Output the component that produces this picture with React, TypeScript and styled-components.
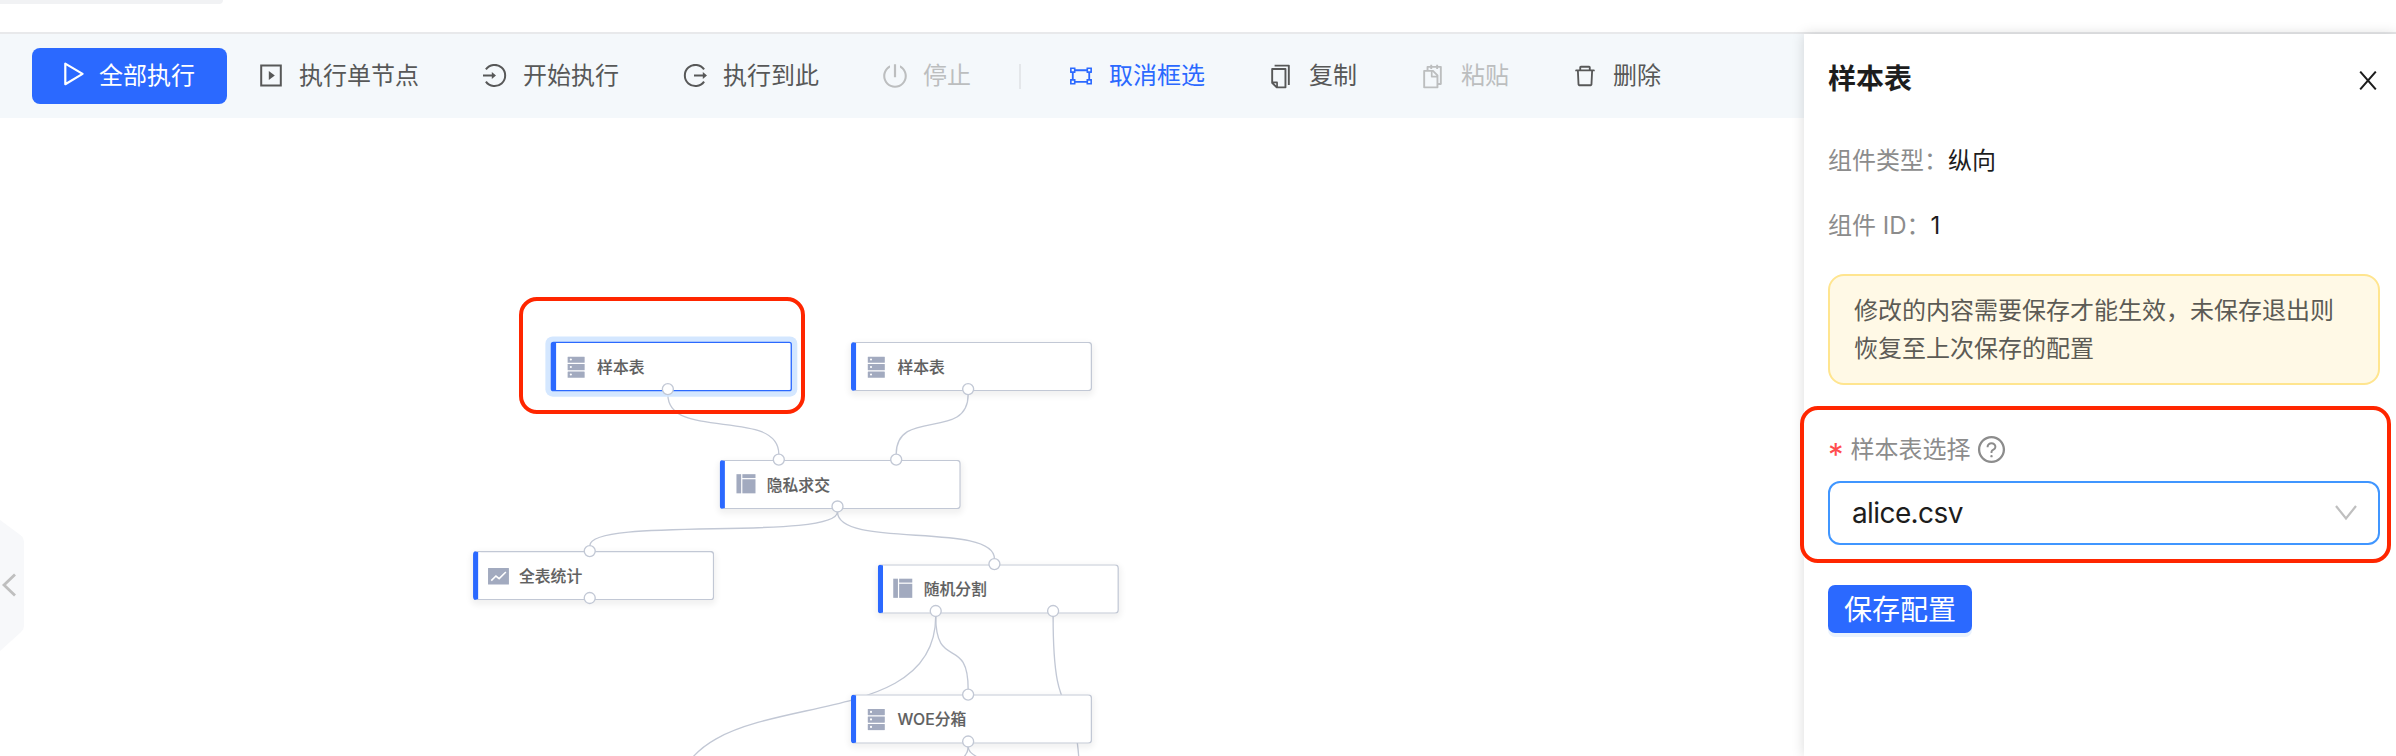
import React from 'react';
import styled, { createGlobalStyle } from 'styled-components';
import {
  AiOutlineCopy,
  AiOutlineDelete,
  AiOutlineGateway,
  AiOutlinePoweroff,
  AiOutlineQuestionCircle,
  AiOutlineSnippets,
} from 'react-icons/ai';

const GlobalStyle = createGlobalStyle`
  * { box-sizing: border-box; }
  body {
    margin: 0;
    background: #fff;
    font-family: Inter, "Noto Sans CJK SC", sans-serif;
    overflow: hidden;
  }
  button { font-family: inherit; border: 0; background: none; padding: 0; }
`;

const Page = styled.div`
  height: 756px;
  width: 100%;
  display: flex;
  flex-direction: column;
  overflow: hidden;
`;

const TopStrip = styled.header`
  flex: none;
  height: 34px;
  border-bottom: 2px solid #e8e9eb;
`;

const TabStub = styled.div`
  width: 223px;
  height: 4px;
  background: #f1f2f4;
  border-radius: 0 0 8px 0;
`;

const Main = styled.div`
  flex: 1;
  min-height: 0;
  display: flex;
`;

const Workspace = styled.main`
  flex: 1;
  min-width: 0;
  display: flex;
  flex-direction: column;
`;

const Toolbar = styled.div`
  flex: none;
  height: 84px;
  padding-left: 32px;
  display: flex;
  align-items: center;
  background: #f4f8fb;
`;

const RunAll = styled.button`
  width: 195px;
  height: 56px;
  margin-right: 32px;
  padding: 0 0 0 29px;
  display: flex;
  align-items: center;
  gap: 14px;
  border-radius: 8px;
  background: #2b69ff;
  color: #fff;
  font-size: 24px;
  line-height: 36px;

  svg { margin-top: -4px; }
`;

const toneColor = { normal: '#575858', disabled: '#bcbebf', active: '#2b69ff' };
type Tone = keyof typeof toneColor;

const Tool = styled.button<{ $tone: Tone }>`
  display: flex;
  align-items: center;
  gap: 16px;
  margin-right: 64px;
  font-size: 24px;
  line-height: 36px;
  white-space: nowrap;
  color: ${(p) => toneColor[p.$tone]};

  svg { flex: none; }
`;

const ToolGlyph = styled.span`
  display: flex;
  justify-content: center;
  width: 24px;
  margin: 0 0.5px 0 -0.5px;
`;

const Divider = styled.span`
  width: 2px;
  height: 25px;
  margin: 0 48px 0 -16px;
  background: #e4e7ea;
`;

const Canvas = styled.section`
  position: relative;
  flex: 1;
  min-height: 0;
  overflow: hidden;
`;

const ZoomLayer = styled.div`
  position: absolute;
  inset: 0;
  transform: scale(1.34);
  transform-origin: 0 0;
`;

const EdgeLayer = styled.svg`
  position: absolute;
  left: 0;
  top: 0;
  width: 1346px;
  height: 476px;
  overflow: visible;
`;

const NodeCard = styled.div<{ $x: number; $y: number; $selected?: boolean }>`
  position: absolute;
  left: ${(p) => p.$x}px;
  top: ${(p) => p.$y}px;
  width: 180px;
  height: 36.5px;
  padding-left: 7.5px;
  display: flex;
  align-items: center;
  gap: 7px;
  background: #fff;
  border: 1px solid ${(p) => (p.$selected ? '#2b69ff' : '#c2c8d5')};
  border-left: 4px solid #2b69ff;
  border-radius: ${(p) => (p.$selected ? 2 : 3)}px;
  box-shadow: ${(p) => (p.$selected ? '0 0 0 4px #d4e7ff' : '0 2px 5px 1px rgba(0, 0, 0, 0.06)')};
`;

const NodeLabel = styled.span`
  position: relative;
  left: 0.3px;
  top: 0.4px;
  font-size: 11.8px;
  line-height: 18px;
  font-weight: 500;
  color: #606060;
  -webkit-text-stroke: 0.1px #606060;
`;

const CollapseHandle = styled.div`
  position: absolute;
  left: 0;
  top: 402px;
  width: 24px;
  height: 132px;
`;

const Highlight = styled.div<{ $x: number; $y: number; $w: number; $h: number }>`
  position: absolute;
  left: ${(p) => p.$x}px;
  top: ${(p) => p.$y}px;
  width: ${(p) => p.$w}px;
  height: ${(p) => p.$h}px;
  border: 4px solid #ff2600;
  border-radius: 18px;
  pointer-events: none;
`;

const Panel = styled.aside`
  position: relative;
  flex: none;
  width: 592px;
  padding: 25px 16px 0 24px;
  background: #fff;
  box-shadow: 0 0 12px rgba(0, 0, 0, 0.15);
`;

const PanelHeader = styled.div`
  display: flex;
  align-items: center;
  justify-content: space-between;
  height: 40px;
  margin-bottom: 44px;
`;

const PanelTitle = styled.h2`
  margin: 0;
  font-size: 28px;
  line-height: 40px;
  font-weight: 700;
  color: #1d1d1d;
`;

const CloseIcon = styled.svg`
  margin: 3px 3px 0 0;
`;

const Field = styled.div`
  height: 36px;
  margin-bottom: 29px;
  font-size: 24px;
  line-height: 36px;
  color: #8c8c8c;

  b { font-weight: 400; color: #1d1d1d; }
`;

const Notice = styled.div`
  height: 111px;
  margin-top: 30px;
  padding: 16px 24px;
  border: 2px solid #ffe58f;
  border-radius: 16px;
  background: #fff9e6;
  font-size: 24px;
  line-height: 38px;
  color: #5c5b55;
`;

const FormLabel = styled.label`
  display: flex;
  align-items: center;
  height: 36px;
  margin: 47px 0 13px;
  font-size: 24px;
  line-height: 36px;
  color: #8c8c8c;

  svg { margin-left: 5px; margin-top: -2px; }
`;

const Required = styled.span`
  width: 22.5px;
  height: 36px;
  line-height: 46px;
  font-family: Inter, sans-serif;
  font-size: 31px;
  color: #ff4d4f;
`;

const Select = styled.div`
  display: flex;
  align-items: center;
  justify-content: space-between;
  height: 64px;
  padding: 0 21px 0 22px;
  border: 2px solid #4096ff;
  border-radius: 12px;
  font-size: 28px;
  letter-spacing: -0.6px;
  color: #1d1d1d;
`;

const SaveButton = styled.button`
  display: block;
  width: 144px;
  height: 48px;
  margin-top: 40px;
  border-radius: 7px;
  background: #2b69ff;
  color: #fff;
  font-size: 28px;
  line-height: 48px;
  box-shadow: 0 4px 0 #e9f2fe;
`;

const SaveText = styled.span`
  display: block;
  padding-top: 1px;
`;

const PlayIcon = () => (
  <svg width="24" height="26" viewBox="0 0 24 26" fill="none" stroke="currentColor" strokeWidth="2.2" strokeLinejoin="round">
    <path d="M4.3 2.6v20.6L21.6 12.9z" />
  </svg>
);

const RunNodeIcon = () => (
  <svg width="24" height="24" viewBox="0 0 24 24" fill="none" stroke="currentColor" strokeWidth="2">
    <path d="M2.2 1.5h19.6v20H2.2z" />
    <path d="M9.8 7v9l6-4.5z" fill="currentColor" stroke="none" />
  </svg>
);

const RunFromIcon = () => (
  <svg width="24" height="24" viewBox="0 0 24 24" fill="none" stroke="currentColor" strokeWidth="2">
    <path d="M2.9 5.4A10.6 10.6 0 1 1 2.9 17.6" />
    <path d="M0 11.5h10" />
    <path d="M8.8 8v7l4.2-3.5z" fill="currentColor" stroke="none" />
  </svg>
);

const RunToIcon = () => (
  <svg width="24" height="24" viewBox="0 0 24 24" fill="none" stroke="currentColor" strokeWidth="2">
    <path d="M21.1 5.4A10.6 10.6 0 1 0 21.1 17.6" />
    <path d="M11 11.5h10" />
    <path d="M19.8 8v7l4.2-3.5z" fill="currentColor" stroke="none" />
  </svg>
);

type NodeIconKind = 'table' | 'layout' | 'chart';

const NodeIcon = ({ kind }: { kind: NodeIconKind }) => (
  <svg width="16" height="16" viewBox="0 0 16 16" fill="#a2aabf">
    {kind === 'table' &&
      [0, 5.6, 11.2].map((y) => (
        <g key={y}>
          <rect x="1.6" y={y} width="12.7" height="4.7" rx="0.3" />
          <circle cx="4" cy={y + 2.2} r="0.8" fill="#fff" />
        </g>
      ))}
    {kind === 'layout' && (
      <>
        <rect x="0.6" y="0.8" width="3.5" height="14.3" />
        <rect x="5" y="0.8" width="9.8" height="2.9" />
        <rect x="5" y="4.6" width="9.8" height="10.5" />
      </>
    )}
    {kind === 'chart' && (
      <>
        <rect x="0.2" y="1.8" width="15.6" height="12.4" rx="0.3" />
        <path d="M2.6 11.2l3.5-3.4 2.4 2 5-5" fill="none" stroke="#fff" strokeWidth="1.2" />
      </>
    )}
  </svg>
);

interface GraphNode {
  id: string;
  label: string;
  x: number;
  y: number;
  icon: NodeIconKind;
  selected?: boolean;
  top: number[];
  bottom: number[];
}

const NODES: GraphNode[] = [
  { id: 'alice', label: '样本表', x: 410.8, y: 167.4, icon: 'table', selected: true, top: [], bottom: [87.6] },
  { id: 'bob', label: '样本表', x: 634.9, y: 167.4, icon: 'table', top: [], bottom: [87.6] },
  { id: 'psi', label: '隐私求交', x: 537.4, y: 255, icon: 'layout', top: [43.8, 131.4], bottom: [87.6] },
  { id: 'stats', label: '全表统计', x: 352.5, y: 323.3, icon: 'chart', top: [87.6], bottom: [87.6] },
  { id: 'split', label: '随机分割', x: 654.5, y: 333, icon: 'layout', top: [87.6], bottom: [43.8, 131.4] },
  { id: 'woe', label: 'WOE分箱', x: 634.9, y: 430.4, icon: 'table', top: [87.6], bottom: [87.6] },
];

type Point = [number, number];

const byId = (id: string) => NODES.find((n) => n.id === id)!;
const outPort = (id: string, i = 0): Point => [byId(id).x + byId(id).bottom[i], byId(id).y + 34.9];
const inPort = (id: string, i = 0): Point => [byId(id).x + byId(id).top[i], byId(id).y - 0.1];

const EDGES: [Point, Point][] = [
  [outPort('alice'), inPort('psi', 0)],
  [outPort('bob'), inPort('psi', 1)],
  [outPort('psi'), inPort('stats')],
  [outPort('psi'), inPort('split')],
  [outPort('split', 0), inPort('woe')],
  [outPort('split', 0), [504.1, 517.2]],
  [outPort('split', 1), [806, 511.2]],
  [outPort('woe'), [573, 517.2]],
  [outPort('woe'), [1045, 517.2]],
];

const edgePath = ([[sx, sy], [ex, ey]]: [Point, Point]) => {
  const offset = 4;
  const control = Math.floor(((ey - sy) / 3) * 2);
  return `M${sx} ${sy}V${sy + offset}C${sx} ${sy + offset + control} ${ex} ${ey - offset - control} ${ex} ${ey - offset}V${ey}`;
};

export default function App() {
  return (
    <Page>
      <GlobalStyle />
      <TopStrip>
        <TabStub />
      </TopStrip>
      <Main>
        <Workspace>
          <Toolbar>
            <RunAll><PlayIcon />全部执行</RunAll>
            <Tool $tone="normal"><RunNodeIcon />执行单节点</Tool>
            <Tool $tone="normal"><RunFromIcon />开始执行</Tool>
            <Tool $tone="normal"><RunToIcon />执行到此</Tool>
            <Tool $tone="disabled"><ToolGlyph><AiOutlinePoweroff size={28} /></ToolGlyph>停止</Tool>
            <Divider />
            <Tool $tone="active"><ToolGlyph><AiOutlineGateway size={26} /></ToolGlyph>取消框选</Tool>
            <Tool $tone="normal"><ToolGlyph><AiOutlineCopy size={27} /></ToolGlyph>复制</Tool>
            <Tool $tone="disabled"><ToolGlyph><AiOutlineSnippets size={27} /></ToolGlyph>粘贴</Tool>
            <Tool $tone="normal"><ToolGlyph><AiOutlineDelete size={26} /></ToolGlyph>删除</Tool>
          </Toolbar>
          <Canvas>
            <ZoomLayer>
              <EdgeLayer fill="none" stroke="#c2c8d5" strokeWidth="1">
                {EDGES.map((e, i) => <path key={i} d={edgePath(e)} />)}
              </EdgeLayer>
              {NODES.map((n) => (
                <NodeCard key={n.id} $x={n.x} $y={n.y} $selected={n.selected}>
                  <NodeIcon kind={n.icon} />
                  <NodeLabel>{n.label}</NodeLabel>
                </NodeCard>
              ))}
              <EdgeLayer fill="#fff" stroke="#c2c8d5" strokeWidth="1">
                {NODES.flatMap((n) => [
                  ...n.top.map((_, i) => inPort(n.id, i)),
                  ...n.bottom.map((_, i) => outPort(n.id, i)),
                ]).map(([x, y], i) => <circle key={i} cx={x} cy={y} r="4.1" />)}
              </EdgeLayer>
            </ZoomLayer>
            <CollapseHandle>
              <svg width="24" height="132" viewBox="0 0 24 132">
                <path d="M0 0l21 15.5q3 2.5 3 6V106q0 3.5-3 6L0 131z" fill="#f7f8fa" />
                <path d="M15 54.5L4 65 15 75.5" fill="none" stroke="#bfbfbf" strokeWidth="2.8" />
              </svg>
            </CollapseHandle>
            <Highlight $x={518.5} $y={178.5} $w={286.5} $h={117.5} />
          </Canvas>
        </Workspace>
        <Panel>
          <PanelHeader>
            <PanelTitle>样本表</PanelTitle>
            <CloseIcon width="18" height="19" viewBox="0 0 18 19" fill="none" stroke="#1d1d1d" strokeWidth="2">
              <path d="M1.2 0.6l15.6 17.8M16.8 0.6L1.2 18.4" />
            </CloseIcon>
          </PanelHeader>
          <Field>组件类型：<b>纵向</b></Field>
          <Field>组件 ID：<b>1</b></Field>
          <Notice>修改的内容需要保存才能生效，未保存退出则恢复至上次保存的配置</Notice>
          <FormLabel>
            <Required>*</Required>样本表选择<AiOutlineQuestionCircle size={31} />
          </FormLabel>
          <Select>
            alice.csv
            <svg width="22" height="16" viewBox="0 0 22 16" fill="none" stroke="#bfbfbf" strokeWidth="2.2">
              <path d="M1 1l10 12.5L21 1" />
            </svg>
          </Select>
          <SaveButton><SaveText>保存配置</SaveText></SaveButton>
          <Highlight $x={-4} $y={372} $w={591} $h={157} />
        </Panel>
      </Main>
    </Page>
  );
}
